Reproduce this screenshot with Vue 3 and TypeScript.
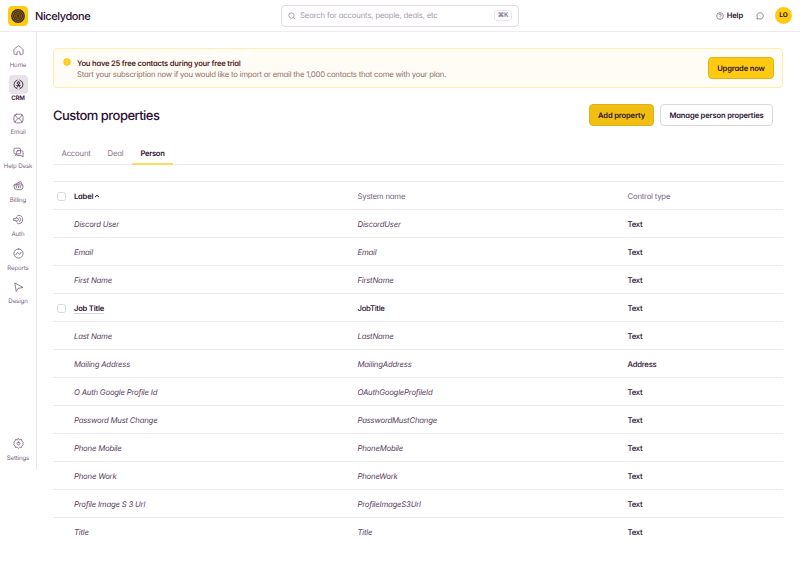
<script setup lang="ts">
interface NavItem { label: string; icon: string; active?: boolean }
interface PropertyRow { label: string; system: string; type: string; custom?: boolean }

const nav: NavItem[] = [
  { label: 'Home', icon: 'home' },
  { label: 'CRM', icon: 'crm', active: true },
  { label: 'Email', icon: 'email' },
  { label: 'Help Desk', icon: 'desk' },
  { label: 'Billing', icon: 'billing' },
  { label: 'Auth', icon: 'auth' },
  { label: 'Reports', icon: 'reports' },
  { label: 'Design', icon: 'design' },
  { label: 'Settings', icon: 'settings' },
]

const icons: Record<string, string[]> = {
  home: ['M7.500 21H5.500a3.500 3.500 0 0 1-3.500-3.500v-6.700a3 3 0 0 1 1.100-2.300l7-5.700a3 3 0 0 1 3.800 0l7 5.700a3 3 0 0 1 1.100 2.300v6.700a3.500 3.500 0 0 1-3.500 3.500h-2', 'M8.500 21v-3.500a3.500 3.500 0 0 1 7 0V21'],
  crm: ['M9 21.500A10 10 0 0 1 9 2.500M15 2.500a10 10 0 0 1 0 19', 'M12 6a2.800 2.800 0 1 0 0 5.600a2.800 2.800 0 0 0 0-5.600', 'M8 14h8M8.500 18.500L12 14l3.500 4.500M12 11.600V14'],
  email: ['M8 2.500h8a6 6 0 0 1 6 6v7a6 6 0 0 1-6 6H8a6 6 0 0 1-6-6v-7a6 6 0 0 1 6-6z', 'M4.500 4.500l3.500 5c1.500 2.500 6.500 2.500 8 0l3.500-5', 'M4.500 19.500l3.500-5c1.500-2.500 6.500-2.500 8 0l3.500 5'],
  desk: ['M6 15H5a3 3 0 0 1-3-3V6a3.500 3.500 0 0 1 3.500-3.500H13A3.500 3.500 0 0 1 16.500 6v7a2 2 0 0 1-2 2H10l-4 3z', 'M11 8h7.500A3.500 3.500 0 0 1 22 11.500V22l-4-3.500h-7A3.500 3.500 0 0 1 7.500 15v-3.500A3.500 3.500 0 0 1 11 8z'],
  billing: ['M2.500 11h19v5a5 5 0 0 1-5 5h-9a5 5 0 0 1-5-5z', 'M3 10.500l14-7.500 3 7.500M7 10.500l9-3', 'M8 14v3M12 14v3M16 14v3'],
  auth: ['M9 4.500l3-1.500a9 9 0 0 1 0 18l-3-1.500', 'M2 10h5V7l6 5-6 5v-3H2z', 'M14 8a4.200 4.200 0 0 1 0 8'],
  reports: ['M12 2a10 10 0 1 0 0 20a10 10 0 0 0 0-20z', 'M6 15l3.500-5 4.500 4 4-5'],
  design: ['M4 3l3 17.500 4-6.500 10-2z'],
  settings: ['M12 1.500l2.700 2.600 3.800-.900.900 3.800L22.500 9.500 21.200 12l1.300 2.500-3.100 2.500-.900 3.800-3.800-.900L12 22.500l-2.700-2.600-3.800.900-.900-3.800-3.100-2.500L2.800 12 1.500 9.500l3.100-2.500.900-3.800 3.800.900z', 'M12 8.800a3.200 3.200 0 1 0 0 6.400a3.200 3.200 0 0 0 0-6.400z'],
}

const tabs: string[] = ['Account', 'Deal', 'Person']

const rows: PropertyRow[] = [
  { label: 'Discord User', system: 'DiscordUser', type: 'Text' },
  { label: 'Email', system: 'Email', type: 'Text' },
  { label: 'First Name', system: 'FirstName', type: 'Text' },
  { label: 'Job Title', system: 'JobTitle', type: 'Text', custom: true },
  { label: 'Last Name', system: 'LastName', type: 'Text' },
  { label: 'Mailing Address', system: 'MailingAddress', type: 'Address' },
  { label: 'O Auth Google Profile Id', system: 'OAuthGoogleProfileId', type: 'Text' },
  { label: 'Password Must Change', system: 'PasswordMustChange', type: 'Text' },
  { label: 'Phone Mobile', system: 'PhoneMobile', type: 'Text' },
  { label: 'Phone Work', system: 'PhoneWork', type: 'Text' },
  { label: 'Profile Image S 3 Url', system: 'ProfileImageS3Url', type: 'Text' },
  { label: 'Title', system: 'Title', type: 'Text' },
]
</script>

<template>
  <div class="app">
    <header class="topbar">
      <div class="brand">
        <svg class="logo" viewBox="0 0 20 20">
          <rect width="20" height="20" rx="4.200" fill="#ffcb12" />
          <circle cx="10" cy="10" r="6.900" fill="#3d2614" />
          <g fill="none" stroke="#c4921a" stroke-width=".55">
            <circle cx="10" cy="10" r="5.300" /><circle cx="10" cy="10" r="3.600" /><circle cx="10" cy="10" r="1.900" />
          </g>
        </svg>
        <span class="brand-name">Nicelydone</span>
      </div>
      <div class="search">
        <svg class="search-icon" viewBox="0 0 24 24"><circle cx="10.500" cy="10.500" r="8" /><path d="M16.500 16.500L22 22" /></svg>
        <span class="placeholder">Search for accounts, people, deals, etc</span>
        <kbd>⌘K</kbd>
      </div>
      <div class="actions">
        <svg class="top-icon" viewBox="0 0 24 24"><circle cx="12" cy="12" r="10" /><path d="M8.500 9.500C8.500 5 15.500 5.500 15.500 9.500c0 2.500-3.500 2.500-3.500 5M12 17v1.500" /></svg>
        <span class="help">Help</span>
        <svg class="top-icon chat" viewBox="0 0 24 24"><path d="M2.500 21l1.500-5a9.500 9.500 0 1 1 4 4z" /></svg>
        <span class="avatar">LO</span>
      </div>
    </header>
    <div class="body">
      <nav class="sidebar">
        <a v-for="item in nav" :key="item.label" class="nav-item" :class="{ active: item.active, last: item.icon === 'settings' }">
          <span class="nav-icon"><svg viewBox="0 0 24 24"><path v-for="d in icons[item.icon]" :key="d" :d="d" /></svg></span>
          <span class="nav-label">{{ item.label }}</span>
        </a>
      </nav>
      <main>
        <section class="banner">
          <svg class="info" viewBox="0 0 8 8"><circle cx="4" cy="4" r="3.700" fill="#ffcb12" /><path d="M4 3.600v2.200M4 2v.8" stroke="#fff" stroke-width=".8" /></svg>
          <div class="banner-text">
            <strong>You have 25 free contacts during your free trial</strong>
            <p>Start your subscription now if you would like to import or email the 1,000 contacts that come with your plan.</p>
          </div>
          <button class="btn upgrade">Upgrade now</button>
        </section>
        <div class="heading">
          <h1>Custom properties</h1>
          <button class="btn add">Add property</button>
          <button class="btn manage">Manage person properties</button>
        </div>
        <div class="tabs">
          <a v-for="tab in tabs" :key="tab" class="tab" :class="{ current: tab === 'Person' }">{{ tab }}</a>
        </div>
        <div class="table">
          <div class="row head">
            <span class="check"><i class="box"></i></span>
            <span class="sort">Label<svg viewBox="0 0 6 4"><path d="M1 3l2-1.700L5 3" /></svg></span>
            <span>System name</span>
            <span>Control type</span>
          </div>
          <div v-for="row in rows" :key="row.system" class="row" :class="{ custom: row.custom }">
            <span class="check"><i v-if="row.custom" class="box"></i></span>
            <span class="name"><span>{{ row.label }}</span></span>
            <span class="system">{{ row.system }}</span>
            <span class="type">{{ row.type }}</span>
          </div>
        </div>
      </main>
    </div>
  </div>
</template>

<style>
body { margin: 0; background: #fff; }
</style>

<style scoped>
* { box-sizing: border-box; }
.app { height: 584px; overflow: hidden; background: #fff; color: #2e0f33; font-family: Inter, "Liberation Sans", sans-serif; font-feature-settings: "cv11"; text-rendering: geometricPrecision; font-size: 7.750px; letter-spacing: -.210px; line-height: 11px; }
svg { display: block; flex: none; }
.topbar { height: 32px; border-bottom: 1px solid #eeecee; display: grid; grid-template-columns: 281px 238px 1fr; align-items: center; }
.brand { display: flex; align-items: center; padding-left: 8px; }
.logo { width: 20px; height: 20px; }
.brand-name { margin-left: 7px; font-size: 11px; line-height: 16px; padding-top: 1px; font-weight: 500; letter-spacing: -.400px; }
.search { height: 22px; border: 1px solid #dfdbe0; border-radius: 4px; display: flex; align-items: center; padding: 0 6px; }
.search-icon { width: 8px; height: 8px; fill: none; stroke: #9b8a9f; stroke-width: 2.400; }
.placeholder { margin-left: 4px; color: #a999ad; flex: 1; white-space: nowrap; letter-spacing: -.170px; }
kbd { width: 18px; height: 11px; border: 1px solid #ebe8ec; border-radius: 3px; font: 500 6.500px/9px Inter, "DejaVu Sans", sans-serif; color: #6f5a74; text-align: center; white-space: nowrap; }
.actions { display: flex; align-items: center; justify-content: flex-end; padding-right: 8px; }
.top-icon { width: 8px; height: 8px; fill: none; stroke: #79647e; stroke-width: 2.300; }
.help { margin-left: 3px; font-size: 7.600px; font-weight: 600; letter-spacing: -.150px; }
.chat { margin: 0 11px 0 13px; }
.avatar { width: 17px; height: 17px; border-radius: 50%; background: #ffcb12; font-size: 6.500px; line-height: 17px; font-weight: 700; text-align: center; letter-spacing: 0; }
.body { display: flex; }
.sidebar { width: 37px; height: 438px; border-right: 1px solid #e9e6ea; padding-top: 9px; display: flex; flex-direction: column; flex: none; }
.nav-item { height: 33.850px; display: flex; flex-direction: column; align-items: center; color: #79647e; flex: none; }
.nav-item.last { margin-top: auto; margin-bottom: 2px; }
.nav-icon { width: 19px; height: 19px; border-radius: 4px; display: grid; place-items: center; }
.nav-icon svg { width: 11px; height: 11px; fill: none; stroke: currentColor; stroke-width: 1.800; stroke-linejoin: round; stroke-linecap: round; }
.nav-label { margin-top: 1.500px; font-size: 6.100px; line-height: 8px; white-space: nowrap; letter-spacing: -.120px; margin-bottom: -1px; }
.active { color: #2e0f33; }
.active .nav-icon { background: #e6e2e7; }
.active .nav-label { font-weight: 600; }
main { flex: 1; padding: 16px 17px 0 16px; }
.banner { height: 40px; border: 1px solid #ffedb0; border-radius: 4px; background: #fffcf5; display: flex; padding: 9px 8px 0 9px; }
.info { width: 8px; height: 8px; }
.banner-text { flex: 1; margin-left: 6px; white-space: nowrap; }
.banner-text strong { display: block; font-size: 7.600px; font-weight: 600; color: #51261e; line-height: 11px; letter-spacing: -.210px; }
.banner-text p { margin: 0; color: #917267; line-height: 10px; letter-spacing: -.236px; }
.btn { height: 22px; padding: 0; border-radius: 4px; border: 1px solid #e0b11b; background: #ffcb12; color: #2e0f33; font: inherit; font-size: 7.600px; text-rendering: inherit; font-feature-settings: inherit; font-weight: 600; letter-spacing: -.150px; text-align: center; white-space: nowrap; }
.upgrade { width: 66px; }
.banner .upgrade { align-self: flex-start; margin-top: -1px; }
.heading { display: flex; align-items: center; margin-top: 16px; padding-right: 10px; height: 22px; }
h1 { margin: 0; padding-top: 2px; flex: 1; font-size: 13px; line-height: 20px; font-weight: 500; letter-spacing: -.530px; }
.add { width: 65px; background: #f1bf12; margin-right: 6px; }
.manage { width: 113px; background: #fff; border-color: #dcd8dd; }
.tabs { margin-top: 17px; height: 22px; border-bottom: 1px solid #ebe9ec; display: flex; color: #8a768e; }
.tab { padding: 5px 8.500px 0; height: 22px; }
.current { color: #2e0f33; font-size: 7.600px; font-weight: 600; letter-spacing: -.300px; border-bottom: 2px solid #ffdb5c; }
.table { margin-top: 16px; border-top: 1px solid #ebe9ec; }
.row { height: 28px; border-bottom: 1px solid #ebe9ec; display: grid; grid-template-columns: 21px 283.500px 270px 1fr; align-items: center; white-space: nowrap; padding-top: 1px; }
.row:last-child { border-bottom: 0; }
.check { padding-left: 4px; }
.box { display: block; width: 9px; height: 9px; border: 1px solid #dcd7dd; border-radius: 2.500px; }
.head { color: #79647e; }
.sort { display: flex; align-items: center; color: #2e0f33; font-size: 7.600px; font-weight: 600; }
.sort svg { width: 6px; height: 4px; margin-left: 1px; fill: none; stroke: #2e0f33; stroke-width: 1; }
.name, .system { font-style: italic; color: #594060; }
.type { font-weight: 500; letter-spacing: -.250px; }
.custom .name, .custom .system { font-style: normal; font-weight: 500; color: #2e0f33; }
.custom .system { letter-spacing: -.300px; }
.custom .name { font-size: 7.600px; font-weight: 600; }
.custom .name span { border-bottom: 1px solid #ddd3df; }
</style>
